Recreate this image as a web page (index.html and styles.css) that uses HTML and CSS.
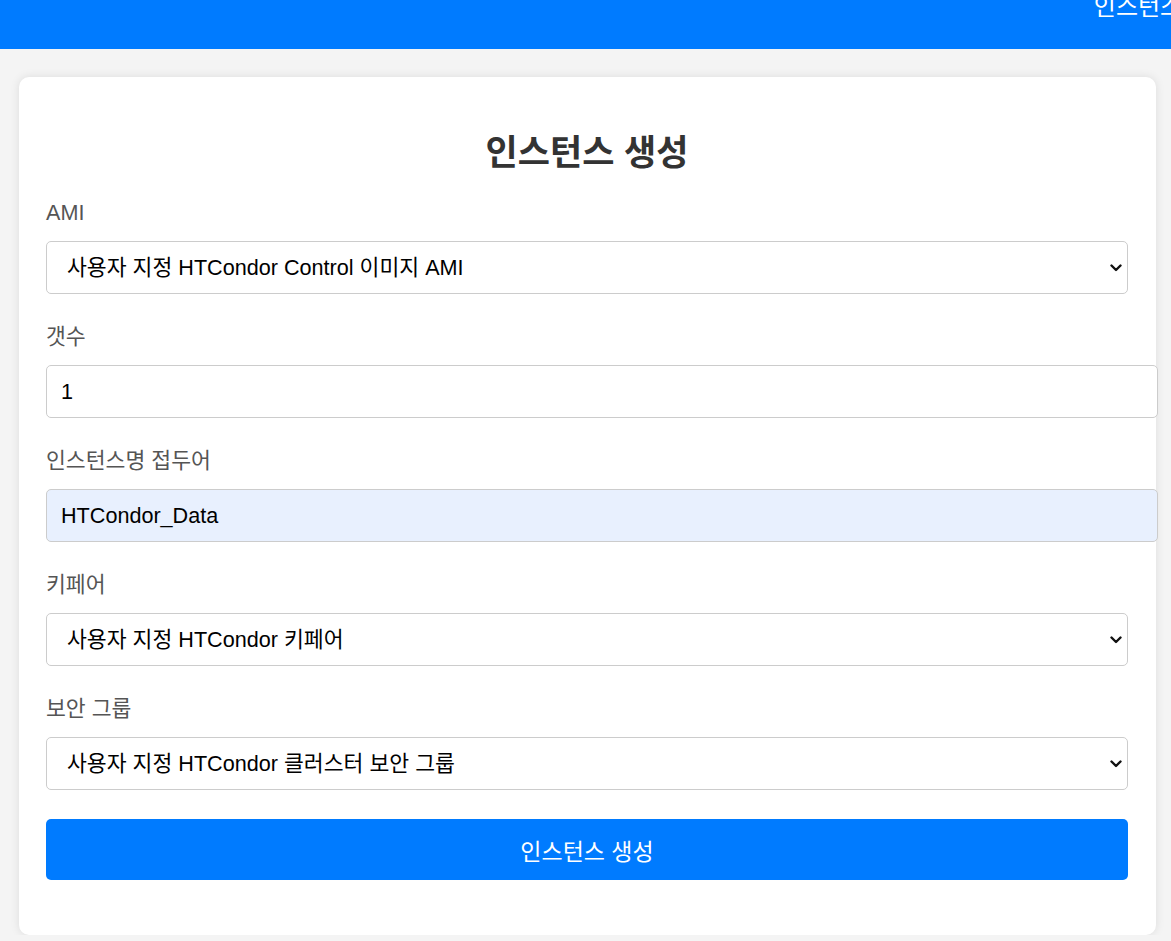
FILE: index.html
```html
<!DOCTYPE html>
<html lang="ko">
<head>
<meta charset="utf-8">
<title>인스턴스 생성</title>
<link rel="stylesheet" href="styles.css">
</head>
<body>
<header class="topbar">
  <nav class="topnav"><a href="#">인스턴스 생성</a></nav>
</header>
<main class="card">
  <h2 class="title">인스턴스 생성</h2>
  <form class="form">
    <div class="group">
      <label class="label">AMI</label>
      <div class="select-wrap">
        <select class="field select">
          <option>사용자 지정 HTCondor Control 이미지 AMI</option>
        </select>
        <svg class="chev" width="12" height="8" viewBox="0 0 12 8"><polyline points="1.5,1.5 6,6 10.5,1.5" fill="none" stroke="#111" stroke-width="2.4" stroke-linecap="round" stroke-linejoin="round"/></svg>
      </div>
    </div>
    <div class="group">
      <label class="label">갯수</label>
      <input class="field input" type="text" value="1">
    </div>
    <div class="group">
      <label class="label">인스턴스명 접두어</label>
      <input class="field input autofill" type="text" value="HTCondor_Data">
    </div>
    <div class="group">
      <label class="label">키페어</label>
      <div class="select-wrap">
        <select class="field select">
          <option>사용자 지정 HTCondor 키페어</option>
        </select>
        <svg class="chev" width="12" height="8" viewBox="0 0 12 8"><polyline points="1.5,1.5 6,6 10.5,1.5" fill="none" stroke="#111" stroke-width="2.4" stroke-linecap="round" stroke-linejoin="round"/></svg>
      </div>
    </div>
    <div class="group last">
      <label class="label">보안 그룹</label>
      <div class="select-wrap">
        <select class="field select">
          <option>사용자 지정 HTCondor 클러스터 보안 그룹</option>
        </select>
        <svg class="chev" width="12" height="8" viewBox="0 0 12 8"><polyline points="1.5,1.5 6,6 10.5,1.5" fill="none" stroke="#111" stroke-width="2.4" stroke-linecap="round" stroke-linejoin="round"/></svg>
      </div>
    </div>
    <button class="submit" type="button">인스턴스 생성</button>
  </form>
</main>
</body>
</html>
```
FILE: styles.css
```css
* { font-family: "Liberation Sans", "Noto Sans CJK KR", sans-serif; }
html, body { margin: 0; padding: 0; }
body { background: #f4f4f4; color: #333; }

.topbar {
  height: 49px;
  background: #007bff;
  overflow: hidden;
}
.topnav {
  display: flex;
  justify-content: flex-end;
}
.topnav a {
  color: #fff;
  text-decoration: none;
  font-size: 24px;
  line-height: 26px;
  white-space: nowrap;
  margin-top: -6px;
  margin-right: -62px;
}

.card {
  margin: 28px 15px 0 19px;
  background: #fff;
  border-radius: 10px;
  box-shadow: 0 0 10px rgba(0, 0, 0, 0.1);
  padding: 56px 28px 55px 27px;
}
.title {
  margin: 0 0 29px;
  text-align: center;
  font-size: 35px;
  line-height: 40px;
  font-weight: bold;
  color: #333;
}
.form { display: flex; flex-direction: column; }
.group { display: flex; flex-direction: column; margin-bottom: 32px; }
.group.last { margin-bottom: 29px; }
.label {
  font-size: 21.6px;
  line-height: 22px;
  color: #555;
  margin-bottom: 17px;
}
.field {
  font-size: 21.6px;
  color: #000;
  border: 1px solid #ccc;
  border-radius: 5px;
  background: #fff;
  margin: 0;
}
.select-wrap { position: relative; }
.select {
  box-sizing: border-box;
  width: 100%;
  height: 53px;
  padding: 0 30px 0 20px;
  appearance: none;
  -webkit-appearance: none;
}
.chev {
  position: absolute;
  right: 6px;
  top: 23px;
  pointer-events: none;
}
.input {
  box-sizing: content-box;
  width: 100%;
  height: 23px;
  padding: 14px;
  outline: none;
}
.autofill { background: #e8f0fe; }

.submit {
  height: 61px;
  width: 100%;
  border: none;
  border-radius: 5px;
  background: #007bff;
  color: #fff;
  font-size: 23px;
  cursor: pointer;
}
```
